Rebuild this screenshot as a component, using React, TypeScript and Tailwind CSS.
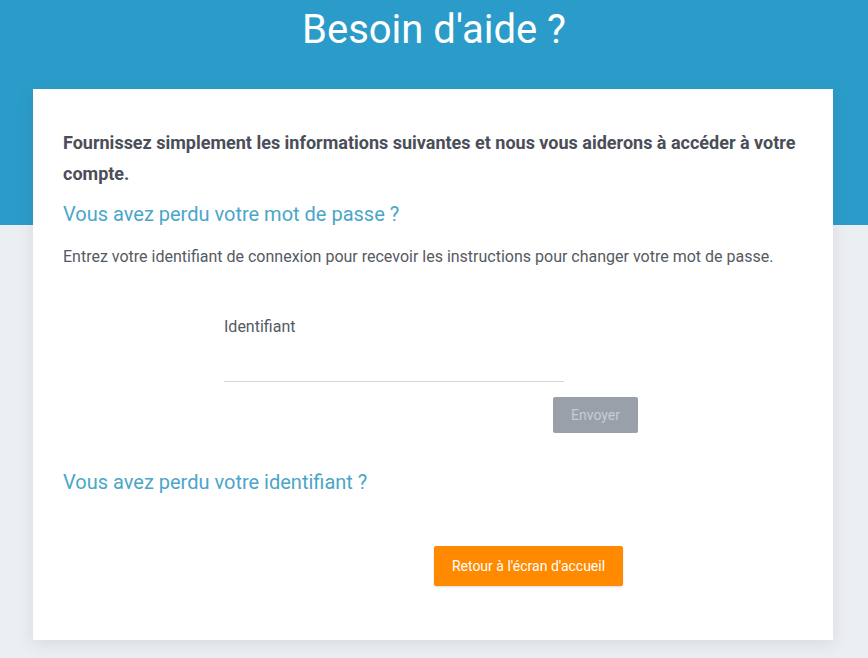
export default function App() {
  return (
    <div
      className="relative min-h-[658px] w-full bg-[#eceff2] overflow-hidden"
      style={{ fontFamily: "Roboto, 'Noto Sans', sans-serif" }}
    >
      <div className="absolute left-0 right-0 top-0 h-[225px] bg-[#2b9cc9]" />
      <div className="relative flex flex-col items-center">
        <h1 className="mt-[6px] h-[83px] text-[40px] leading-[48px] font-normal text-white">
          Besoin d'aide ?
        </h1>
        <div className="ml-[-2px] w-[800px] h-[551px] bg-white shadow-[0_4px_16px_rgba(60,70,90,0.12)] px-[30px] pt-[38px]">
          <p className="text-[18px] leading-[31px] font-bold text-[#4a4e58]">
            Fournissez simplement les informations suivantes et nous vous aiderons à accéder à votre compte.
          </p>
          <h2 className="mt-[13px] text-[20px] leading-[24px] text-[#4aa6c9]">
            Vous avez perdu votre mot de passe ?
          </h2>
          <p className="mt-[21px] text-[16px] leading-[20px] text-[#555a62]">
            Entrez votre identifiant de connexion pour recevoir les instructions pour changer votre mot de passe.
          </p>
          <div className="ml-[161px] mt-[50px] w-[340px]">
            <label className="block text-[16px] leading-[20px] text-[#555a62]">Identifiant</label>
            <div className="mt-[44px] h-px bg-[#d4d6da]" />
          </div>
          <div className="flex justify-end pr-[165px] mt-[15px]">
            <button className="w-[85px] h-[36px] bg-[#9aa0aa] rounded-[2px] text-[14px] text-[#c9ccd2]">
              Envoyer
            </button>
          </div>
          <h2 className="mt-[37px] text-[20px] leading-[24px] text-[#4aa6c9]">
            Vous avez perdu votre identifiant ?
          </h2>
          <div className="flex mt-[52px] pl-[371px]">
            <button className="w-[189px] h-[40px] bg-[#ff8a00] rounded-[2px] text-[14px] text-white shadow-[0_1px_2px_rgba(0,0,0,0.15)]">
              Retour à l'écran d'accueil
            </button>
          </div>
        </div>
      </div>
    </div>
  );
}
